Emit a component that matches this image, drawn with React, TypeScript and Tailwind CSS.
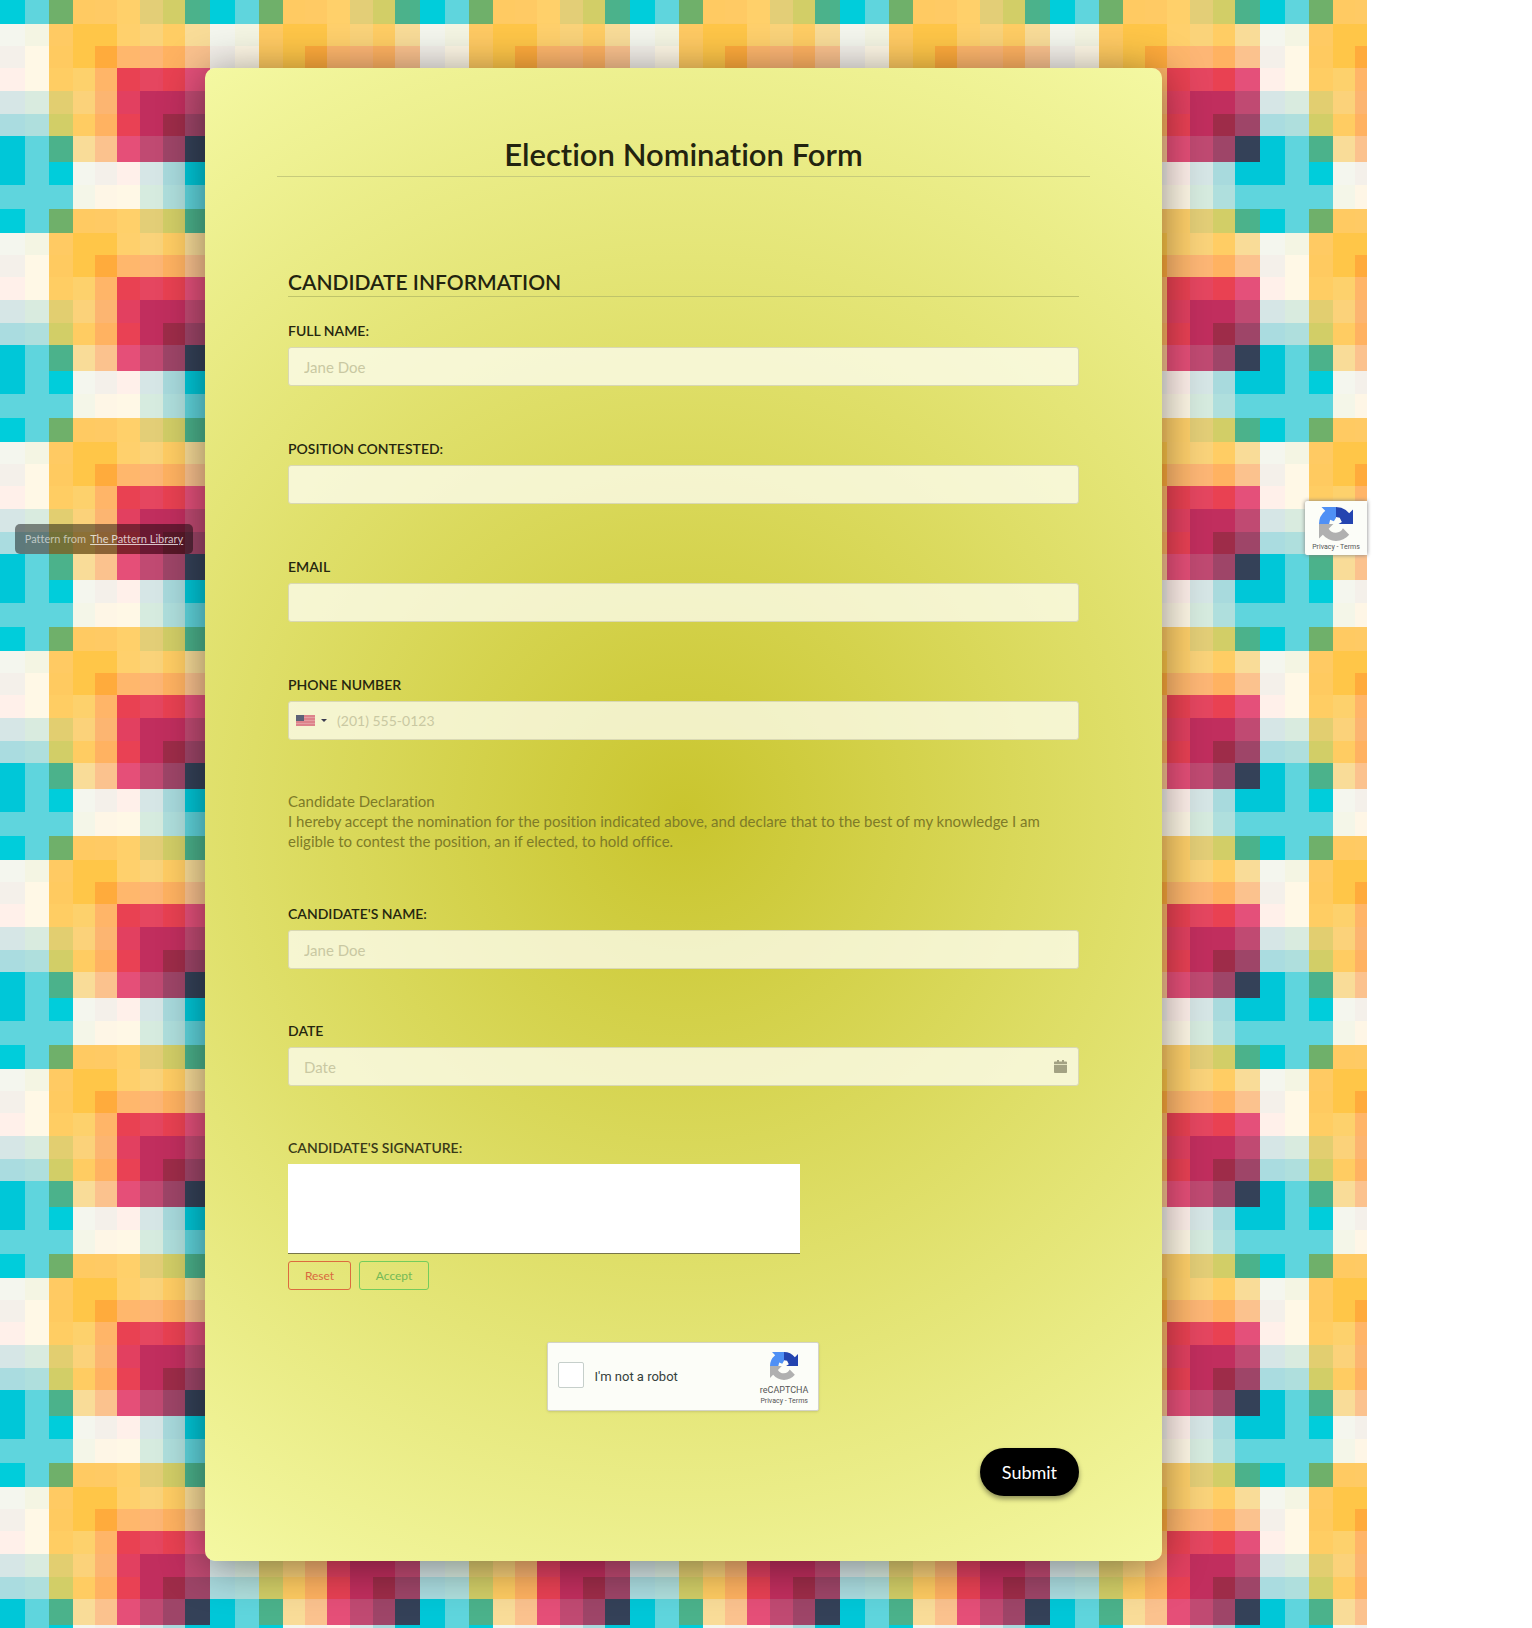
import { useState } from "react";
import type { ReactNode } from "react";

const COLS = [0, 25, 49, 73, 95, 117, 140, 163, 185, 210];
const ROWS = [0, 24, 46, 68, 91, 114, 136, 162, 185, 209];

const TILE = [
  ["#00cddb", "#5fd5dd", "#6fb06a", "#ffca62", "#ffca64", "#ffd06a", "#e3ce77", "#d2ce67", "#4bb28b"],
  ["#f4f6ee", "#f4f5e3", "#ffca63", "#ffc648", "#ffc648", "#ffd06c", "#fad37a", "#ffcd64", "#f9dc98"],
  ["#f4f0ea", "#fff8e6", "#ffca60", "#ffc648", "#ffab3c", "#ffb76c", "#fdb675", "#ffb261", "#fbc28e"],
  ["#fff0ea", "#fff8e6", "#ffcd63", "#fdd16c", "#ffb568", "#e94152", "#e54660", "#e94152", "#e4507a"],
  ["#d6e6e6", "#d9ebdf", "#e2ce70", "#fbd27a", "#fcb571", "#e24060", "#c12e5e", "#c12e5e", "#c04a72"],
  ["#aadce0", "#afdfdd", "#d2ce67", "#ffcc62", "#ffb261", "#e94154", "#c12e5e", "#9e2c49", "#9e4568"],
  ["#00c7d8", "#5fd5dd", "#4bb28b", "#f9dc98", "#fbc28e", "#e54f78", "#c04a72", "#9e4568", "#344158"],
  ["#00c7d8", "#5fd5dd", "#00cddb", "#f4f6ee", "#f4f0ea", "#fff0ea", "#d6e6e6", "#a8dadd", "#00c7d8"],
  ["#5fd5dd", "#5fd5dd", "#5fd5dd", "#f4f6e8", "#fef6e6", "#fff8e6", "#d6ebdf", "#afdfdd", "#5fd5dd"],
];

function PatternBackground() {
  return (
    <svg className="absolute inset-0 h-full w-full" aria-hidden="true">
      <defs>
        <pattern id="plaid" width="210" height="209" patternUnits="userSpaceOnUse">
          {TILE.map((row, r) =>
            row.map((fill, c) => (
              <rect
                key={`${r}-${c}`}
                x={COLS[c]}
                y={ROWS[r]}
                width={COLS[c + 1] - COLS[c]}
                height={ROWS[r + 1] - ROWS[r]}
                fill={fill}
              />
            ))
          )}
        </pattern>
      </defs>
      <rect width="100%" height="100%" fill="url(#plaid)" />
    </svg>
  );
}

function RecaptchaLogo({ className }: { className: string }) {
  return (
    <svg viewBox="0 0 64 64" className={className} aria-hidden="true">
      <path fill="#2444b0" d="M64 31.95V4.6l-7.18 7.18A31.96 31.96 0 0 0 32 0v19l7 1 4 8-6.2 4H64z" />
      <path fill="#4f90f5" d="M32 0H4.6l7.2 7.2A31.97 31.97 0 0 0 0 32h19l2-8 7 3 4-7V0z" />
      <path fill="#b0b0b0" d="M0 32v27.3l7.2-7.2a31.97 31.97 0 0 0 49.6-.1L45.1 40.2a15.3 15.3 0 0 1-26.9.7L27.1 32z" />
    </svg>
  );
}

function UsFlag() {
  return (
    <svg viewBox="0 0 19 11" className="h-[11px] w-[19px] opacity-70" aria-hidden="true">
      <rect width="19" height="11" fill="#d4536f" />
      <path stroke="#de7c8f" strokeWidth="1" d="M0 2.5h19M0 5.5h19M0 8.5h19" />
      <rect width="8" height="6" fill="#1d2452" />
    </svg>
  );
}

function CalendarIcon() {
  return (
    <svg viewBox="0 0 13 13" className="h-[13px] w-[13px]" aria-hidden="true">
      <path fill="#a3a283" d="M3 0h2v1.5h3V0h2v1.5h2.2c.5 0 .8.3.8.8V4H0V2.3c0-.5.3-.8.8-.8H3zM0 4.7h13v7.5c0 .5-.3.8-.8.8H.8c-.5 0-.8-.3-.8-.8z" />
    </svg>
  );
}

type FieldProps = {
  id: string;
  label: string;
  placeholder?: string;
  type?: string;
  before?: ReactNode;
  after?: ReactNode;
};

function Field({ id, label, placeholder, type = "text", before, after }: FieldProps) {
  return (
    <div className="flex flex-col gap-1.5">
      <label htmlFor={id} className="text-sm leading-5 font-semibold text-[#25260f] uppercase">
        {label}
      </label>
      <div className="flex h-[39px] items-center rounded-[3px] border border-[#d9d8b4] bg-[#fefdf6]/75">
        {before}
        <input
          id={id}
          type={type}
          placeholder={placeholder}
          className={`h-full min-w-0 flex-1 bg-transparent outline-none placeholder:text-[#c9c8a2] ${before ? "px-2.5 text-sm" : "px-[15px] text-[15px]"}`}
        />
        {after}
      </div>
    </div>
  );
}

export default function App() {
  const [checked, setChecked] = useState(false);

  return (
    <div className="bg-white pr-[165px] font-[Lato,sans-serif] [font-variant-ligatures:none]">
      <div className="relative pt-[68px] pb-[67px]">
        <PatternBackground />

        <main className="relative mx-auto w-[70%] rounded-[10px] bg-[radial-gradient(circle,#c9c52e,#f4f8a2)] px-[72px] pt-[66px] pb-[65px] shadow-[0_5px_45px_rgba(0,0,0,0.45)]">
          <form onSubmit={(e) => e.preventDefault()}>
            <h1 className="border-b border-[#c7cb7c] pb-0.5 text-center text-[31px] leading-10 font-semibold text-[#22230f]">
              Election Nomination Form
            </h1>

            <div className="px-[11px] pt-[91px]">
              <h2 className="border-b border-[#bfc46a] text-[21px] leading-7 font-semibold text-[#22230f] uppercase">
                Candidate Information
              </h2>

              <div className="mt-6 flex flex-col gap-[53px]">
                <Field id="full-name" label="Full Name:" placeholder="Jane Doe" />
                <Field id="position" label="Position Contested:" />
                <Field id="email" label="Email" type="email" />
                <Field
                  id="phone"
                  label="Phone Number"
                  type="tel"
                  placeholder="(201) 555-0123"
                  before={
                    <button type="button" aria-label="Country" className="flex items-center gap-1.5 pl-[7px]">
                      <UsFlag />
                      <span className="h-0 w-0 border-x-3 border-t-3 border-x-transparent border-t-[#3c3c50]" />
                    </button>
                  }
                />
              </div>

              <p className="mt-[51px] text-[15px] leading-5 text-[#7e7b28]">
                Candidate Declaration
                <br />
                I hereby accept the nomination for the position indicated above, and declare that to the best of my knowledge I am eligible to contest the position, an if elected, to hold office.
              </p>

              <div className="mt-[53px] flex flex-col gap-[52px]">
                <Field id="candidate-name" label="Candidate's Name:" placeholder="Jane Doe" />
                <Field
                  id="date"
                  label="Date"
                  placeholder="Date"
                  after={
                    <button type="button" aria-label="Pick a date" className="pr-[11px]">
                      <CalendarIcon />
                    </button>
                  }
                />
                <div>
                  <label htmlFor="signature" className="block text-sm leading-5 font-semibold text-[#3a3a18] uppercase">
                    Candidate's Signature:
                  </label>
                  <textarea
                    id="signature"
                    className="mt-1.5 block h-[90px] w-full max-w-[512px] resize-none border-b border-[#77754a] bg-white outline-none"
                  />
                  <div className="mt-[7px] flex gap-2 text-xs">
                    <button type="reset" className="h-[29px] w-[63px] rounded-[3px] border border-[#dc6b3f] text-[#d96a3f]">
                      Reset
                    </button>
                    <button type="button" className="h-[29px] w-[70px] rounded-[3px] border border-[#74cc5c] text-[#74b956]">
                      Accept
                    </button>
                  </div>
                </div>
              </div>

              <div className="mx-auto mt-[52px] flex h-[69px] w-[272px] items-center rounded-xs border border-[#d3d3c8] bg-[#fcfdf8] pr-2.5 pl-2.5 font-[Roboto,sans-serif] shadow-sm">
                <input
                  id="robot"
                  type="checkbox"
                  checked={checked}
                  onChange={(e) => setChecked(e.target.checked)}
                  className="mb-1 h-[26px] w-[26px] appearance-none rounded-xs border border-[#c6cfcb] bg-white checked:bg-[#4285f4]"
                />
                <label htmlFor="robot" className="ml-2.5 flex-1 text-[13px] text-[#35403c]">
                  I'm not a robot
                </label>
                <div className="flex flex-col items-center pt-1 text-[#555]">
                  <RecaptchaLogo className="h-[28px] w-[28px]" />
                  <span className="mt-1 text-[9px] leading-3">reCAPTCHA</span>
                  <span className="text-[7px] leading-[10px] whitespace-pre">
                    <a href="#privacy">Privacy</a>{" - "}<a href="#terms">Terms</a>
                  </span>
                </div>
              </div>

              <div className="mt-[37px] flex justify-end">
                <button type="submit" className="h-12 w-[99px] rounded-full bg-black text-lg text-white shadow-[0_3px_5px_rgba(0,0,0,0.4)]">
                  Submit
                </button>
              </div>
            </div>
          </form>
        </main>

        <p className="absolute top-[524px] left-[15px] flex h-[30px] w-[178px] items-center justify-center gap-1 rounded-[5px] bg-black/45 text-[11px] text-white/60">
          Pattern from
          <a href="#pattern-library" className="text-white/75 underline">The Pattern Library</a>
        </p>

        <aside className="absolute top-[501px] right-0 flex h-[54px] w-[62px] flex-col items-center rounded-l-xs bg-[#fcfdf8] pt-1.5 font-[Roboto,sans-serif] text-[7px] text-[#555] shadow-[0_0_4px_gray]">
          <RecaptchaLogo className="h-[34px] w-[34px]" />
          <span className="mt-0.5 leading-[9px]">
            <a href="#privacy">Privacy</a> - <a href="#terms">Terms</a>
          </span>
        </aside>
      </div>
    </div>
  );
}
